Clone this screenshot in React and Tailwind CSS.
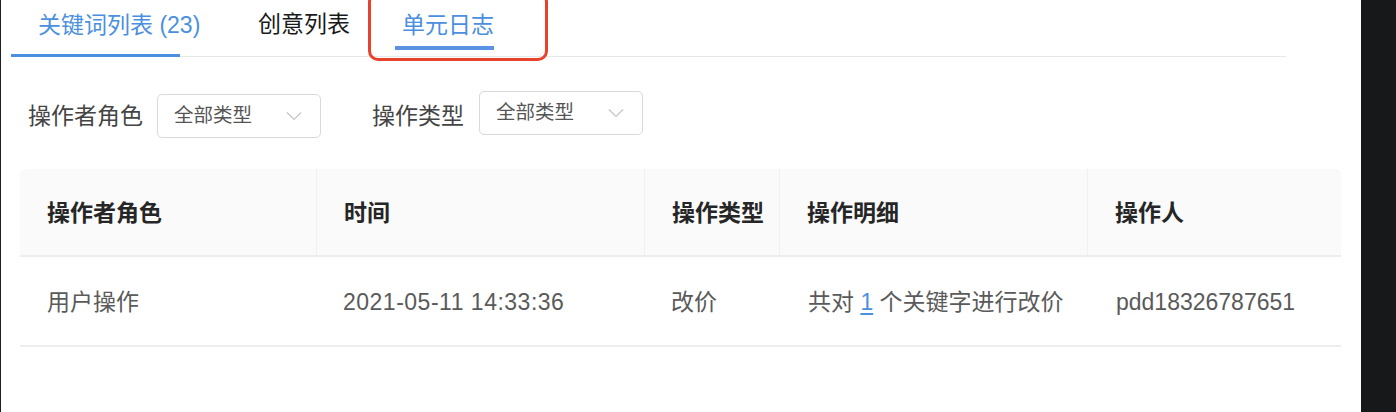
import React from "react";

const FONT = { fontFamily: '"Liberation Sans", "Noto Sans CJK SC", sans-serif' };

function Chevron() {
  return (
    <svg width="16" height="10" viewBox="0 0 16 10" fill="none" className="block">
      <path d="M1 1.5 L8 8.5 L15 1.5" stroke="#c4c4c4" strokeWidth="1.2" />
    </svg>
  );
}

function Select({ className = "" }) {
  return (
    <div
      className={`flex h-[44px] w-[164px] items-center justify-between rounded-[5px] border border-[#d9d9d9] bg-white pl-[16px] pr-[18px] ${className}`}
    >
      <span className="text-[19.5px] text-[#555]">全部类型</span>
      <Chevron />
    </div>
  );
}

const cols = [
  { w: "w-[297px]", head: "操作者角色" },
  { w: "w-[328px]", head: "时间" },
  { w: "w-[135px]", head: "操作类型" },
  { w: "w-[308px]", head: "操作明细" },
  { w: "w-[253px]", head: "操作人" },
];

export default function App() {
  return (
    <div className="relative flex h-[412px] w-[1396px] overflow-hidden bg-[#17181a]" style={FONT}>
      <div className="relative h-full w-[1361px] border-l-[1px] border-[#1e1e1e] bg-white">
        {/* Tabs */}
        <div className="relative ml-[10px] flex h-[57px] w-[1275px] items-start border-b border-[#e8e8e8]">
          <div className="relative h-full w-[247px] pl-[27px] pt-[11px]">
            <span className="text-[23px] leading-[28px] text-[#4a8fe0]">关键词列表 (23)</span>
            <div className="absolute bottom-[-1px] left-0 h-[3px] w-[169px] bg-[#4a8fe0]" />
          </div>
          <div className="h-full w-[144px] pt-[10px]">
            <span className="text-[23px] leading-[28px] text-[#1a1a1a]">创意列表</span>
          </div>
          <div className="relative h-full pt-[11px]">
            <span className="text-[23px] leading-[28px] text-[#4a8fe0]">单元日志</span>
            <div className="absolute left-[-7px] top-[46px] h-[4px] w-[99px] bg-[#5b93e3]" />
            <div className="absolute left-[-34px] top-[-8px] h-[69px] w-[180px] rounded-[10px] border-[3px] border-[#e8412c]" />
          </div>
        </div>

        {/* Filters */}
        <div className="mt-[37px] flex h-[44px] items-center pl-[27px]">
          <span className="pt-[1px] text-[23px] text-[#444]">操作者角色</span>
          <Select className="ml-[14px]" />
          <span className="ml-[51px] pt-[1px] text-[23px] text-[#444]">操作类型</span>
          <Select className="ml-[15px] mb-[7px]" />
        </div>

        {/* Table */}
        <div className="ml-[19px] mt-[31px] w-[1321px]">
          <div className="flex h-[88px] rounded-t-[6px] border-b-2 border-[#ededed] bg-[#fafafa]">
            {cols.map((c, i) => (
              <div
                key={i}
                className={`${c.w} flex items-center pl-[27px] pt-[3px] text-[23px] font-bold text-[#262626] ${
                  i < cols.length - 1 ? "border-r border-[#f1f1f1]" : ""
                }`}
              >
                {c.head}
              </div>
            ))}
          </div>
          <div className="flex h-[90px] border-b-2 border-[#ededed] pt-[3px] text-[23px] text-[#5a5a5a]">
            <div className="flex w-[297px] items-center pl-[27px]">用户操作</div>
            <div className="flex w-[328px] items-center pl-[26px] tracking-[0.5px]">2021-05-11 14:33:36</div>
            <div className="flex w-[135px] items-center pl-[26px]">改价</div>
            <div className="flex w-[308px] items-center pl-[28px]">
              共对&nbsp;<span className="text-[#4a8fe0] underline underline-offset-[3px]">1</span>&nbsp;个关键字进行改价
            </div>
            <div className="flex w-[253px] items-center pl-[28px]">pdd18326787651</div>
          </div>
        </div>
      </div>
    </div>
  );
}
